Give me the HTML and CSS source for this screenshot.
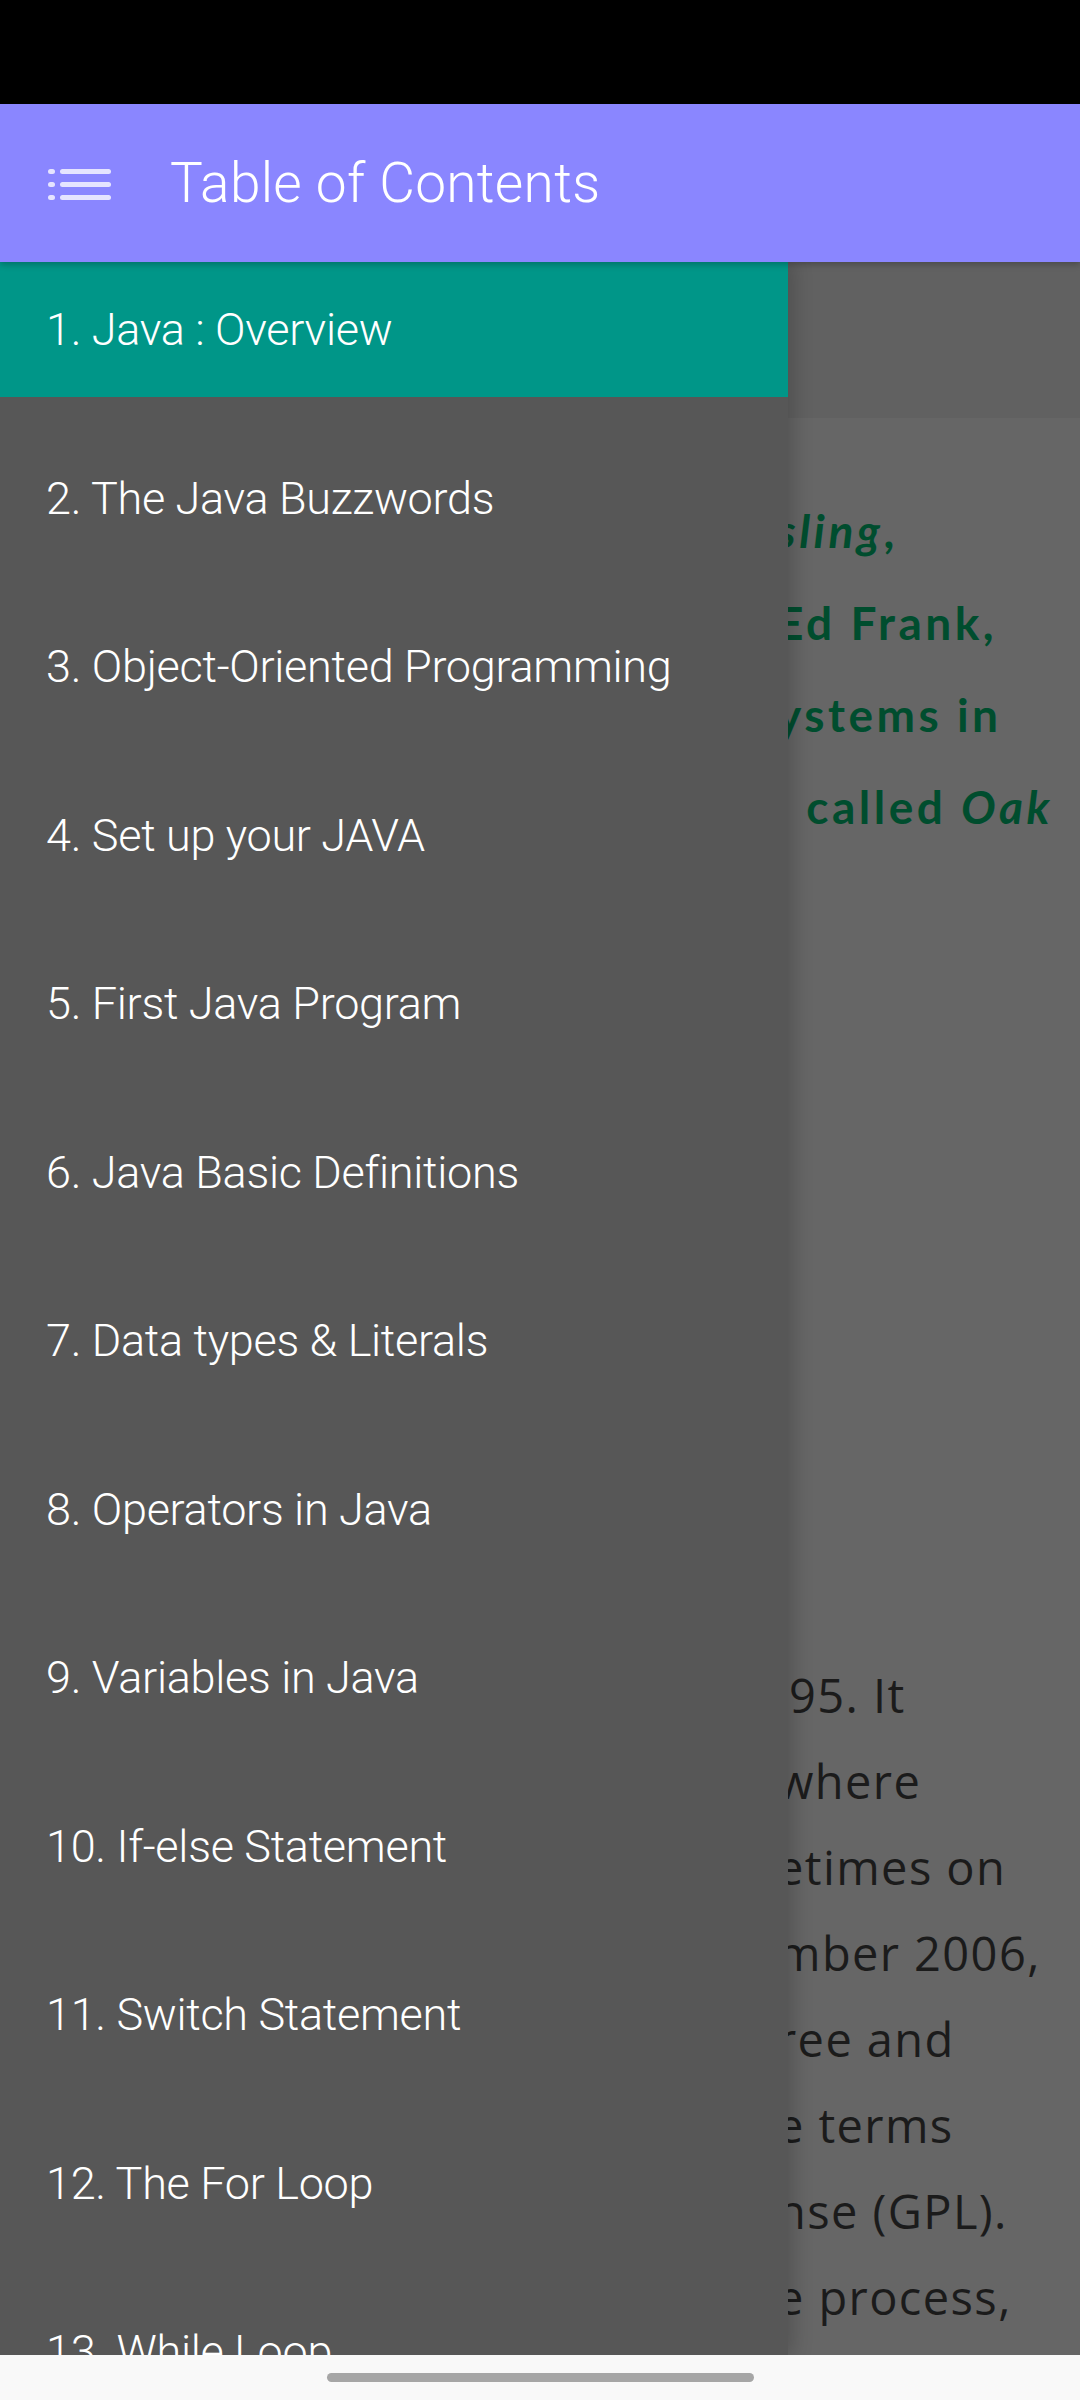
FILE: index.html
```html
<!DOCTYPE html>
<html>
<head>
<meta charset="utf-8">
<link rel="stylesheet" href="styles.css">
</head>
<body>
<div class="screen">
  <div class="statusbar"></div>
  <header class="appbar">
    <svg class="menu-icon" width="64" height="36" viewBox="0 0 64 36">
      <g fill="rgba(255,255,255,0.78)">
        <rect x="0" y="3" width="7" height="5" rx="2.5"/>
        <rect x="12" y="3" width="51" height="5" rx="2.5"/>
        <rect x="0" y="16" width="7" height="5" rx="2.5"/>
        <rect x="12" y="16" width="51" height="5" rx="2.5"/>
        <rect x="0" y="29" width="7" height="5" rx="2.5"/>
        <rect x="12" y="29" width="51" height="5" rx="2.5"/>
      </g>
    </svg>
    <h1 class="title">Table of Contents</h1>
  </header>
  <main class="main">
    <section class="page">
      <div class="page-bar"></div>
      <div class="page-body">
        <div class="lead">
          <div class="line"><em>sling</em>,</div>
          <div class="line">Ed Frank,</div>
          <div class="line">ystems in</div>
          <div class="line">&nbsp;&nbsp;called <em>Oak</em></div>
        </div>
        <div class="body-text">
          <div class="line indent">95. It</div>
          <div class="line">where</div>
          <div class="line">etimes on</div>
          <div class="line">mber 2006,</div>
          <div class="line">ree and</div>
          <div class="line">e terms</div>
          <div class="line">nse (GPL).</div>
          <div class="line">e process,</div>
        </div>
      </div>
    </section>
    <nav class="drawer">
      <ul class="toc">
        <li class="toc-item active">1. Java : Overview</li>
        <li class="toc-item">2. The Java Buzzwords</li>
        <li class="toc-item">3. Object-Oriented Programming</li>
        <li class="toc-item">4. Set up your JAVA</li>
        <li class="toc-item">5. First Java Program</li>
        <li class="toc-item">6. Java Basic Definitions</li>
        <li class="toc-item">7. Data types &amp; Literals</li>
        <li class="toc-item">8. Operators in Java</li>
        <li class="toc-item">9. Variables in Java</li>
        <li class="toc-item">10. If-else Statement</li>
        <li class="toc-item">11. Switch Statement</li>
        <li class="toc-item">12. The For Loop</li>
        <li class="toc-item">13. While Loop</li>
      </ul>
    </nav>
  </main>
  <div class="navbar"><div class="pill"></div></div>
</div>
</body>
</html>
```
FILE: styles.css
```css
html, body {
  margin: 0;
  padding: 0;
  background: #000;
}
.screen {
  width: 1080px;
  height: 2400px;
  overflow: hidden;
  display: flex;
  flex-direction: column;
  font-family: Roboto, "Liberation Sans", sans-serif;
}
.statusbar {
  height: 104px;
  background: #000;
  flex: none;
}
.appbar {
  height: 158px;
  flex: none;
  background: #8a86ff;
  display: flex;
  align-items: center;
  padding-left: 48px;
  position: relative;
  z-index: 3;
  box-shadow: 0 3px 6px rgba(0,0,0,0.22);
}
.menu-icon {
  flex: none;
  margin-top: 2px;
}
.title {
  margin: 0 0 0 58px;
  font-weight: 300;
  font-size: 55px;
  letter-spacing: 0.3px;
  color: #fff;
}
.main {
  flex: 1;
  position: relative;
  overflow: hidden;
}
.page {
  height: 100%;
  background: #666;
  display: flex;
  flex-direction: column;
}
.page-bar {
  height: 156px;
  background: #616161;
  flex: none;
}
.page-body {
  padding-left: 777px;
  white-space: nowrap;
}
.lead {
  padding-top: 67px;
  font-family: Lato, "Open Sans", sans-serif;
  font-weight: 700;
  font-size: 46px;
  letter-spacing: 3.5px;
  line-height: 92px;
  color: #004d2e;
}
.lead em {
  font-style: italic;
}
.body-text {
  margin-top: 799px;
  font-family: "Open Sans", "Noto Sans", sans-serif;
  font-size: 47px;
  line-height: 86px;
  letter-spacing: 1.4px;
  color: #1b1b1b;
}
.body-text .indent {
  text-indent: 12px;
}
.drawer {
  position: absolute;
  left: 0;
  top: 0;
  bottom: 0;
  width: 788px;
  background: #575757;
  box-shadow: 6px 0 18px rgba(0,0,0,0.18);
  z-index: 2;
}
.toc {
  list-style: none;
  margin: 0;
  padding: 0;
  display: flex;
  flex-direction: column;
  gap: 33.5px;
}
.toc-item {
  height: 135px;
  display: flex;
  align-items: center;
  padding-left: 46px;
  font-size: 45px;
  font-weight: 300;
  letter-spacing: -0.3px;
  color: #fff;
  white-space: nowrap;
}
.toc-item.active {
  background: #009688;
}
.navbar {
  height: 45px;
  flex: none;
  background: #f9f9f9;
  display: flex;
  justify-content: center;
  padding-top: 18px;
  box-sizing: border-box;
  position: relative;
  z-index: 4;
}
.pill {
  width: 427px;
  height: 9px;
  border-radius: 5px;
  background: #a6a6a6;
}
```
